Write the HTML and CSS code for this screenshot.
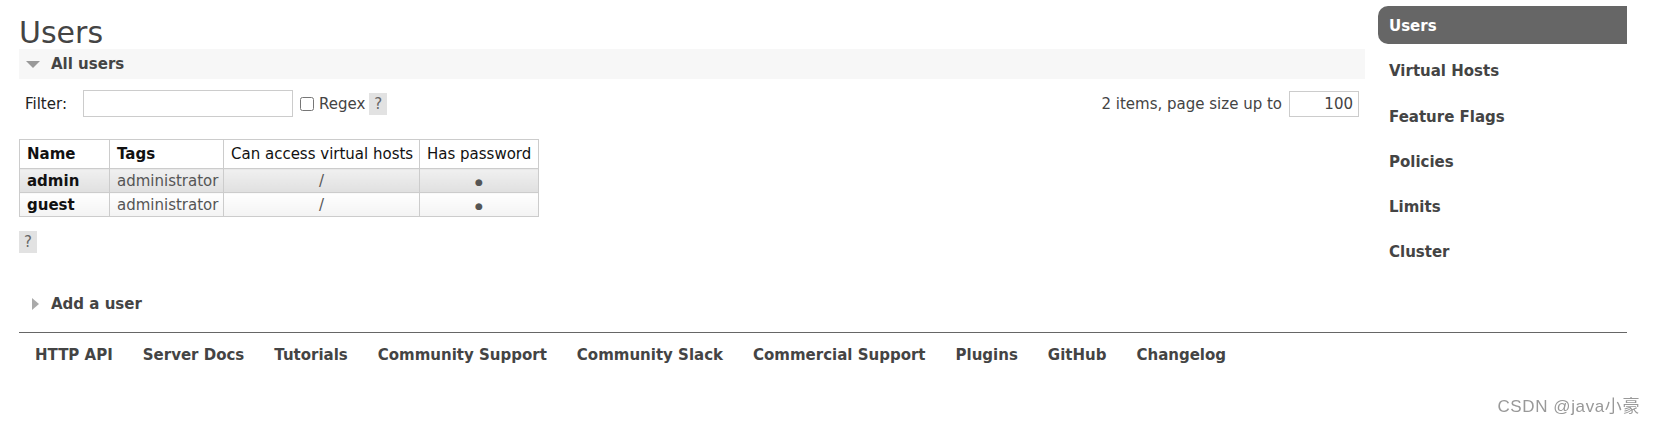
FILE: index.html
```html
<!DOCTYPE html>
<html lang="en">
<head>
<meta charset="utf-8">
<title>Users</title>
<link rel="stylesheet" href="styles.css">
</head>
<body>
<div class="page">
  <div class="top">
    <main class="main">
      <h1 class="title">Users</h1>
      <h2 class="section-head open"><span class="tri-box"><span class="tri tri-down"></span></span>All users</h2>
      <div class="filter-row">
        <div class="filter-left">
          <label class="filter-label">Filter:</label>
          <input class="filter-input" type="text">
          <input type="checkbox" class="cb">
          <span class="regex">Regex</span>
          <span class="help">?</span>
        </div>
        <div class="filter-right">
          <span class="count">2 items, page size up to</span>
          <input class="page-size" type="text" value="100">
        </div>
      </div>
      <table class="list">
        <colgroup>
          <col class="c-name"><col class="c-tags"><col class="c-vh"><col class="c-pw">
        </colgroup>
        <thead>
          <tr>
            <th class="th-bold">Name</th>
            <th class="th-bold">Tags</th>
            <th class="th-plain">Can access virtual hosts</th>
            <th class="th-plain">Has password</th>
          </tr>
        </thead>
        <tbody>
          <tr class="alt1">
            <td class="name">admin</td>
            <td class="tags">administrator</td>
            <td class="center">/</td>
            <td class="center"><span class="dot">●</span></td>
          </tr>
          <tr class="alt2">
            <td class="name">guest</td>
            <td class="tags">administrator</td>
            <td class="center">/</td>
            <td class="center"><span class="dot">●</span></td>
          </tr>
        </tbody>
      </table>
      <div class="help-row"><span class="help">?</span></div>
      <h2 class="section-head closed"><span class="tri-box"><span class="tri tri-right"></span></span>Add a user</h2>
    </main>
    <nav class="rhs">
      <ul class="rhs-list">
        <li><a class="rhs-link active" href="#">Users</a></li>
        <li><a class="rhs-link" href="#">Virtual Hosts</a></li>
        <li><a class="rhs-link" href="#">Feature Flags</a></li>
        <li><a class="rhs-link" href="#">Policies</a></li>
        <li><a class="rhs-link" href="#">Limits</a></li>
        <li><a class="rhs-link" href="#">Cluster</a></li>
      </ul>
    </nav>
  </div>
  <footer class="footer">
    <a class="foot-link" href="#">HTTP API</a>
    <a class="foot-link" href="#">Server Docs</a>
    <a class="foot-link" href="#">Tutorials</a>
    <a class="foot-link" href="#">Community Support</a>
    <a class="foot-link" href="#">Community Slack</a>
    <a class="foot-link" href="#">Commercial Support</a>
    <a class="foot-link" href="#">Plugins</a>
    <a class="foot-link" href="#">GitHub</a>
    <a class="foot-link" href="#">Changelog</a>
  </footer>
</div>
<div class="watermark">CSDN @java小豪</div>
</body>
</html>
```

FILE: styles.css
```css
html, body {
  margin: 0;
  padding: 0;
  background: #fff;
}

body {
  font-family: "DejaVu Sans", Verdana, sans-serif;
  font-size: 15px;
  color: #444;
}

.page {
  padding: 6px 29px 0 19px;
}

.top {
  display: flex;
  gap: 13px;
}

.main {
  flex: 1;
  min-width: 0;
}

.title {
  margin: 10px 0 0 0;
  font-size: 30px;
  line-height: 33px;
  font-weight: normal;
  color: #444;
}

.section-head {
  margin: 0;
  height: 30px;
  display: flex;
  align-items: center;
  padding-left: 7px;
  font-size: 15px;
  font-weight: bold;
  color: #444;
}

.section-head.open {
  background: #f7f7f7;
}

.section-head.closed {
  margin-top: 36px;
}

.tri-box {
  width: 14px;
  margin-right: 11px;
  display: flex;
  align-items: center;
  justify-content: center;
}

.tri {
  display: block;
  width: 0;
  height: 0;
}

.tri-down {
  border-left: 7px solid transparent;
  border-right: 7px solid transparent;
  border-top: 7px solid #999;
}

.tri-right {
  border-top: 6px solid transparent;
  border-bottom: 6px solid transparent;
  border-left: 7px solid #aaa;
  margin-left: 5px;
}

.filter-row {
  margin-top: 11px;
  height: 27px;
  padding: 0 6px;
  display: flex;
  justify-content: space-between;
  align-items: center;
}

.filter-left,
.filter-right {
  display: flex;
  align-items: center;
}

.filter-label {
  color: #222;
  margin-right: 16px;
}

.filter-input {
  box-sizing: border-box;
  width: 210px;
  height: 27px;
  border: 1px solid #ccc;
  margin: 0;
  padding: 2px 4px;
  font-family: inherit;
  font-size: 15px;
}

.cb {
  width: 14px;
  height: 14px;
  margin: 0 5px 0 7px;
}

.regex {
  color: #444;
  margin-right: 4px;
}

.help {
  display: inline-flex;
  align-items: center;
  justify-content: center;
  width: 18px;
  height: 22px;
  background: #e2e2e2;
  color: #666;
  font-size: 15px;
}

.count {
  color: #444;
  margin-right: 7px;
}

.page-size {
  box-sizing: border-box;
  width: 70px;
  height: 26px;
  border: 1px solid #ccc;
  margin: 0;
  padding: 2px 5px;
  text-align: right;
  font-family: inherit;
  font-size: 15px;
  color: #444;
}

.list {
  margin-top: 22px;
  border-collapse: collapse;
  table-layout: fixed;
  width: 519px;
  border: 1px solid #ccc;
}

.c-name { width: 90px; }
.c-tags { width: 114px; }
.c-vh { width: 196px; }
.c-pw { width: 119px; }

.list th,
.list td {
  border: 1px solid #ccc;
  padding: 0 7px;
  white-space: nowrap;
  overflow: hidden;
}

.list th {
  height: 28px;
  background: #fff;
  color: #111;
  text-align: left;
}

.th-bold { font-weight: bold; }
.th-plain { font-weight: normal; color: #222; }

.list td {
  height: 23px;
}

.alt1 td {
  background: linear-gradient(#f0f0f0, #e0e0e0);
}

.alt2 td {
  background: linear-gradient(#fff, #f3f3f3);
}

.name {
  font-weight: bold;
  color: #111;
}

.tags {
  color: #555;
}

.center {
  text-align: center;
  color: #555;
}

.dot {
  font-size: 9px;
  vertical-align: middle;
  color: #555;
}

.help-row {
  margin-top: 14px;
  display: flex;
}

.rhs {
  width: 249px;
  flex: none;
}

.rhs-list {
  list-style: none;
  margin: 0;
  padding: 0;
}

.rhs-link {
  display: block;
  height: 38px;
  line-height: 40px;
  margin-bottom: 7.3px;
  padding-left: 11px;
  font-weight: bold;
  color: #444;
  text-decoration: none;
}

.rhs-link.active {
  background: #666;
  color: #fff;
  border-radius: 10px 0 0 10px;
}

.footer {
  margin-top: 13px;
  border-top: 1px solid #666;
  padding: 12px 0 0 16px;
  display: flex;
  gap: 30px;
  line-height: 20px;
}

.foot-link {
  font-weight: bold;
  color: #444;
  text-decoration: none;
}

.watermark {
  position: fixed;
  right: 16px;
  bottom: 9px;
  font-family: "Liberation Sans", "Noto Sans CJK SC", sans-serif;
  font-size: 17px;
  letter-spacing: 0.6px;
  color: #999;
}
```
